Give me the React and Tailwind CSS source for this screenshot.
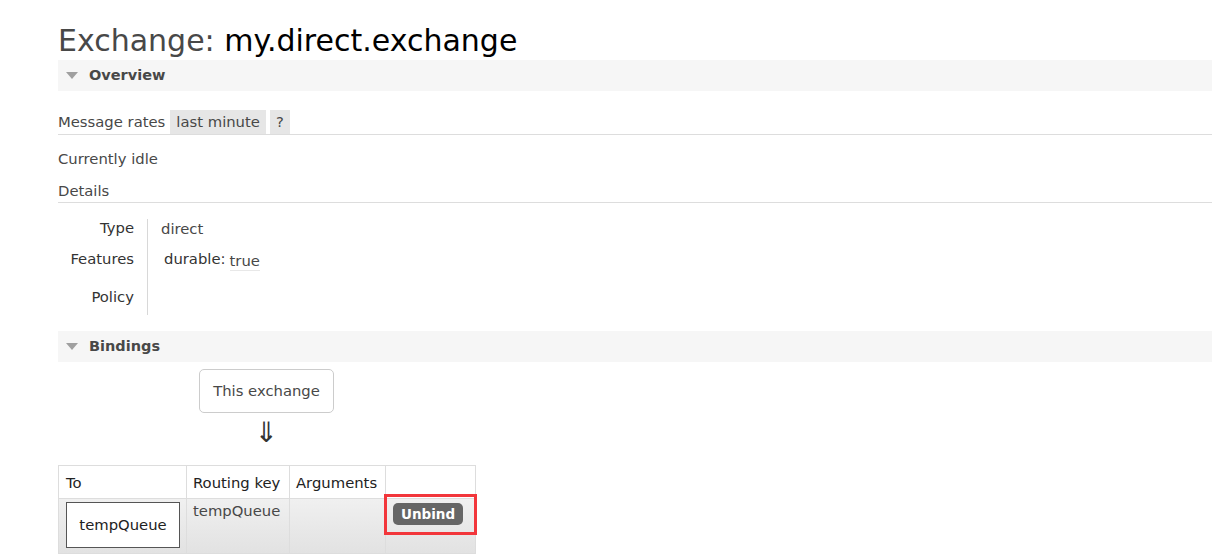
import React from 'react'

const font = { fontFamily: '"DejaVu Sans", Verdana, sans-serif' }

function SectionBar({ title }) {
  return (
    <div className="flex items-center h-[31px] bg-[#f6f6f6] pl-[8px]">
      <span className="w-0 h-0 border-l-[6px] border-r-[6px] border-t-[7px] border-l-transparent border-r-transparent border-t-[#a0a0a0] mr-[11px]" />
      <span className="text-[14.5px] font-bold text-[#484848]">{title}</span>
    </div>
  )
}

export default function App() {
  return (
    <div className="w-[1222px] h-[556px] bg-white overflow-hidden pl-[58px] pr-[10px] text-[14.8px] text-[#484848]" style={font}>
      {/* title */}
      <h1 className="pt-[22px] h-[60px] text-[30px] leading-[38px] font-normal">
        <span className="text-[#484848]">Exchange: </span>
        <span className="text-black">my.direct.exchange</span>
      </h1>

      <SectionBar title="Overview" />

      {/* message rates */}
      <div className="mt-[19px] flex items-stretch h-[25px] border-b border-[#dddddd]">
        <span className="flex items-center pr-[5px]">Message rates</span>
        <span className="flex items-center px-[6px] bg-[#e6e6e6]">last minute</span>
        <span className="flex items-center px-[6px] ml-[4px] bg-[#e6e6e6]">?</span>
      </div>

      <div className="mt-[12px] h-[24px] leading-[24px]">Currently idle</div>

      <div className="mt-[9px] h-[23px] leading-[22px] border-b border-[#dddddd]">Details</div>

      {/* details table */}
      <div className="mt-[16px] flex">
        <div className="w-[90px] pr-[13px] text-right text-[#333333] border-r border-[#d8d8d8]">
          <div className="h-[17px] leading-[18px]">Type</div>
          <div className="h-[47px] pt-[14px] leading-[18px]">Features</div>
          <div className="h-[32px] pt-[5px] leading-[18px]">Policy</div>
        </div>
        <div className="pl-[13px]">
          <div className="h-[17px] leading-[18px] pt-[1px]">direct</div>
          <div className="h-[47px] pt-[14px] leading-[18px] pl-[3px] flex items-start">
            <span className="text-[#333333]">durable:</span>
            <span className="ml-[4px] mt-[2px] border-b border-[#e8e8e8]">true</span>
          </div>
        </div>
      </div>

      <div className="mt-[16px]">
        <SectionBar title="Bindings" />
      </div>

      {/* this exchange */}
      <div className="ml-[141px] mt-[7px] w-[135px] h-[44px] border border-[#cccccc] rounded-[5px] flex items-center justify-center">
        This exchange
      </div>
      <div className="ml-[141px] w-[135px] h-[40px] flex items-center justify-center text-[28px] text-[#333333] leading-none">
        ⇓
      </div>

      {/* bindings table */}
      <div className="mt-[12px] w-[418px] border border-[#dddddd]">
        <div className="flex h-[32px] bg-white text-[#222222]">
          <div className="w-[128px] border-r border-[#dddddd] pl-[7px] flex items-center pt-[2px]">To</div>
          <div className="w-[103px] border-r border-[#dddddd] pl-[6px] flex items-center pt-[2px]">Routing key</div>
          <div className="w-[96px] border-r border-[#dddddd] pl-[6px] flex items-center pt-[2px]">Arguments</div>
          <div className="flex-1" />
        </div>
        <div className="flex h-[55px] border-t border-[#dddddd] bg-gradient-to-b from-[#f0f0f0] to-[#e2e2e2]">
          <div className="w-[128px] border-r border-[#dddddd] pl-[7px] pt-[3px]">
            <div className="w-[114px] h-[46px] bg-white border border-[#555555] flex items-center justify-center text-[#222222]">
              tempQueue
            </div>
          </div>
          <div className="w-[103px] border-r border-[#dddddd] pl-[6px] pt-[3px] leading-[18px]">tempQueue</div>
          <div className="w-[96px] border-r border-[#dddddd]" />
          <div className="flex-1 relative pl-[7px] pt-[4px]">
            <span className="inline-flex items-center h-[22px] px-[8px] rounded-[5px] bg-[#666666] text-white font-bold text-[13.5px]">
              Unbind
            </span>
            <div className="absolute left-[-2px] top-[-5px] w-[93px] h-[41px] border-[3px] border-[#f2363b]" />
          </div>
        </div>
      </div>
    </div>
  )
}
